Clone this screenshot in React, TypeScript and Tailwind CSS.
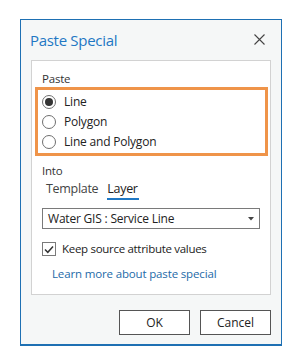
import React from "react";

function Radio({ checked, label }: { checked?: boolean; label: string }) {
  return (
    <div className="flex h-[20px] items-center">
      <div className="ml-[4px] flex h-[14px] w-[14px] items-center justify-center rounded-full border border-[#6f6f6f] bg-white">
        {checked && <div className="h-[8px] w-[8px] rounded-full bg-[#333333]" />}
      </div>
      <span className="ml-[8px] text-[12px] leading-[16px] tracking-[-0.2px] text-[#222222]">{label}</span>
    </div>
  );
}

export default function App() {
  return (
    <div className="h-[364px] w-[300px] bg-white pl-[20px] pt-[19px]" style={{ fontFamily: '"Open Sans", "Noto Sans", sans-serif' }}>
      <div className="flex h-[327px] w-[262px] flex-col border border-b-2 border-[#1e70b3] bg-[#f5f7f7]">
        <div className="flex h-[40px] items-center justify-between pl-[9px] pr-[16px]">
          <span className="text-[15px] leading-[20px] tracking-[-0.3px] text-[#1f78c4]">Paste Special</span>
          <svg width="11" height="11" viewBox="0 0 11 11" className="mt-[-2px]">
            <path d="M0.5 0.5 L10.5 10.5 M10.5 0.5 L0.5 10.5" stroke="#444" strokeWidth="1.1" />
          </svg>
        </div>
        <div className="ml-[10px] mt-0 flex h-[235px] w-[240px] flex-col border border-[#d2d2d2] bg-white">
          <div className="mt-[10px] pl-[10px] text-[11.5px] leading-[16px] tracking-[-0.2px] text-[#333333]">Paste</div>
          <div className="ml-[3px] mr-[2px] flex h-[69px] flex-col border-[3px] border-[#ef9449] pt-[2px]">
            <Radio checked label="Line" />
            <Radio label="Polygon" />
            <Radio label="Line and Polygon" />
          </div>
          <div className="mt-[7px] pl-[10px] text-[11.5px] leading-[16px] tracking-[-0.2px] text-[#333333]">Into</div>
          <div className="flex h-[21px] pl-[14px]">
            <div className="text-[12.5px] leading-[19px] tracking-[-0.3px] text-[#444444]">Template</div>
            <div className="ml-[9px] flex flex-col">
              <div className="text-[12.5px] leading-[19px] tracking-[-0.3px] text-[#222222]">Layer</div>
              <div className="h-[2px] w-[32px] bg-[#1f78c4]" />
            </div>
          </div>
          <div className="ml-[10px] mt-[8px] flex h-[21px] w-[218px] items-center justify-between border border-[#7a7a7a] pl-[5px] pr-[5px]">
            <span className="text-[12px] leading-[16px] tracking-[-0.2px] text-[#222222]">Water GIS : Service Line</span>
            <svg width="6" height="4" viewBox="0 0 6 4"><path d="M0 0 H6 L3 3.5 Z" fill="#444" /></svg>
          </div>
          <div className="ml-[10px] mt-[12px] flex items-center">
            <div className="flex h-[14px] w-[14px] items-center justify-center border border-[#7a7a7a] bg-white">
              <svg width="10" height="9" viewBox="0 0 10 9"><path d="M1 4.5 L3.8 7.3 L9 1.5" fill="none" stroke="#333" strokeWidth="1.5" /></svg>
            </div>
            <span className="ml-[6px] text-[11.5px] leading-[16px] tracking-[-0.3px] text-[#222222]">Keep source attribute values</span>
          </div>
          <div className="ml-[20px] mt-[9px] text-[11.5px] leading-[16px] tracking-[-0.15px] text-[#1d6aa8]">Learn more about paste special</div>
        </div>
        <div className="mt-[15px] flex justify-end gap-[10px] pr-[10px]">
          <div className="flex h-[25px] w-[71px] items-center justify-center border border-[#555555] bg-white text-[12px] text-[#222222]">OK</div>
          <div className="flex h-[25px] w-[71px] items-center justify-center border border-[#555555] bg-white text-[12px] text-[#222222]">Cancel</div>
        </div>
      </div>
    </div>
  );
}
